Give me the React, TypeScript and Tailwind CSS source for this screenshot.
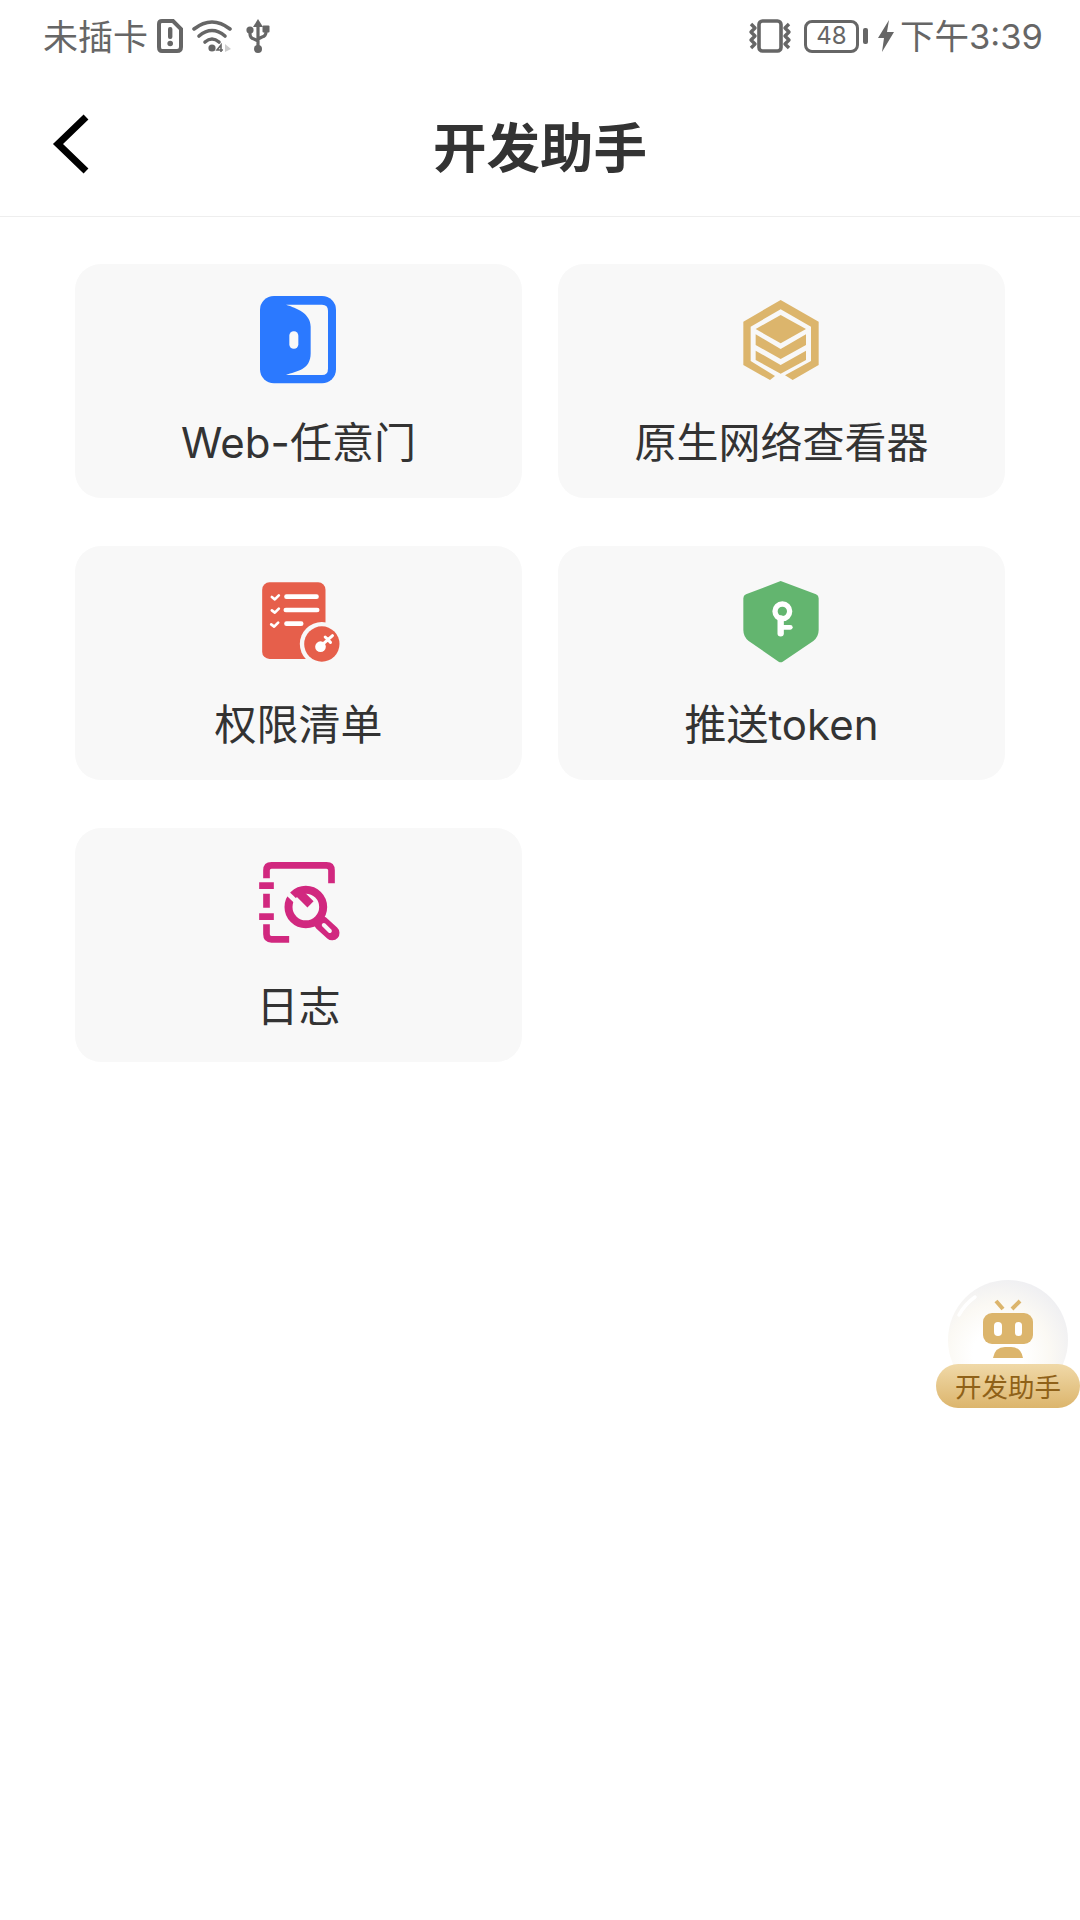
const fontStack = "font-['Inter','Noto_Sans_CJK_SC',sans-serif]";

const DoorIcon = () => (
  <svg viewBox="12 0 390 360" className="h-[120px] w-[130px]">
    <rect x="90" y="48" width="228" height="262" rx="42" fill="#2b79ff" />
    <path
      d="M168 74 H276 Q294 74 294 92 V266 Q294 285 276 285 H168 C200 274 242 270 242 220 V140 C242 100 200 84 168 74 Z"
      fill="#f8f8f8"
    />
    <rect x="178" y="154" width="27" height="52" rx="13" fill="#f8f8f8" />
  </svg>
);

const LayersIcon = () => (
  <svg viewBox="-9 0 390 360" className="h-[120px] w-[130px]" fill="#dcb56c">
    <path d="M182 60 L296 125 V255 L218 300 L195 286 L273 243 V140 L182 88 L92 140 V243 L165 288 L150 300 L70 255 V125 Z" />
    <path d="M182 105 L258 147 L182 190 L107 147 Z" />
    <path d="M107 163 L182 207 L258 163 V195 L182 237 L107 195 Z" />
    <path d="M107 212 L182 255 L258 212 V240 L182 281 L107 240 Z" />
  </svg>
);

const ChecklistIcon = () => (
  <svg viewBox="10.5 -9 390 360" className="h-[120px] w-[130px]">
    <rect x="95" y="52" width="190" height="230" rx="22" fill="#e65f4b" />
    <circle cx="274" cy="237" r="66" fill="#f8f8f8" />
    <circle cx="274" cy="237" r="53" fill="#e65f4b" />
    <g stroke="#fff" strokeLinecap="round" strokeLinejoin="round" fill="none">
      <path d="M168 95 H258" strokeWidth="14" />
      <path d="M166 135 H260" strokeWidth="14" />
      <path d="M168 176 H212" strokeWidth="14" />
      <path d="M124 96 L133 103 L145 91" strokeWidth="8" />
      <path d="M124 136 L133 143 L145 131" strokeWidth="8" />
      <path d="M122 178 L131 185 L143 173" strokeWidth="8" />
      <path d="M272 242 L306 212 M292 224 L300 232 M284 216 L292 224" strokeWidth="9" />
    </g>
    <circle cx="270" cy="245" r="16" fill="#fff" />
  </svg>
);

const ShieldIcon = () => (
  <svg viewBox="-9 -9 390 360" className="h-[120px] w-[130px]">
    <path
      d="M182 48 L288 88 Q296 91 296 100 V195 Q296 215 280 228 L188 290 Q182 294 176 290 L86 228 Q70 215 70 195 V100 Q70 91 78 88 Z"
      fill="#63b56f"
    />
    <g fill="none" stroke="#fff" strokeLinecap="round">
      <circle cx="187" cy="139" r="22" strokeWidth="16" />
      <path d="M182 160 V205" strokeWidth="19" />
      <path d="M184 187 H211" strokeWidth="14" />
    </g>
  </svg>
);

const LogIcon = () => (
  <svg viewBox="10.5 -3 390 360" className="h-[120px] w-[130px]">
    <g fill="none" stroke="#d1287f" strokeWidth="20">
      <path d="M108 100 V76 Q108 61 123 61 H288 Q303 61 303 76 V115" />
      <path d="M86 122 H130 M108 146 V188 M86 215 H130" />
      <path d="M108 238 V268 Q108 283 123 283 H176" />
      <circle cx="226" cy="186" r="52" strokeWidth="24" />
      <path d="M198 136 L240 178" strokeWidth="26" />
      <path d="M272 234 L305 264" strokeWidth="44" strokeLinecap="round" />
    </g>
    <path d="M168 142 L214 186" stroke="#f8f8f8" strokeWidth="14" />
    <path d="M280 240 L298 258" stroke="#f8f8f8" strokeWidth="12" strokeLinecap="round" />
  </svg>
);

const tools = [
  { label: "Web-任意门", icon: <DoorIcon /> },
  { label: "原生网络查看器", icon: <LayersIcon /> },
  { label: "权限清单", icon: <ChecklistIcon /> },
  { label: "推送token", icon: <ShieldIcon /> },
  { label: "日志", icon: <LogIcon /> },
];

const StatusLeft = () => (
  <div className="flex items-center text-[35px] leading-none text-[#666]">
    <span className="pt-[2px]">未插卡</span>
    <svg viewBox="0 0 26 34" className="ml-[9px] h-[34px] w-[26px]">
      <path
        d="M5 2 H16 L24 10 V28 Q24 32 20 32 H5 Q2 32 2 28 V5 Q2 2 5 2 Z"
        fill="none"
        stroke="#666"
        strokeWidth="4"
      />
      <rect x="11" y="8" width="4.4" height="12" rx="2" fill="#666" />
      <circle cx="13.2" cy="24.5" r="2.8" fill="#666" />
    </svg>
    <svg viewBox="0 0 42 34" className="ml-[9px] h-[34px] w-[42px]">
      <g fill="none" stroke="#666" strokeWidth="3.6" strokeLinecap="round">
        <path d="M2 10 Q20 -4 38 10" />
        <path d="M7 17 Q20 6 33 17" />
        <path d="M13 23 Q20 17 27 23" />
      </g>
      <circle cx="20" cy="29" r="3.6" fill="#666" />
      <path d="M29 33 V26 L25 31 H31" fill="none" stroke="#666" strokeWidth="1.6" />
      <path d="M33 25 L39 30 L33 33 Z" fill="#ccc" />
    </svg>
    <svg viewBox="0 0 26 36" className="ml-[11px] h-[36px] w-[26px]">
      <path d="M13 1 L18 9 H8 Z" fill="#666" />
      <path d="M13 6 V30 M5 13 V16 Q5 20 9 21 L13 23 M21 11 V14 Q21 18 17 19 L13 21" fill="none" stroke="#666" strokeWidth="3.2" />
      <circle cx="13" cy="31" r="4" fill="#666" />
      <circle cx="5" cy="12" r="3.6" fill="#666" />
      <rect x="17.5" y="7.5" width="7" height="7" rx="1" fill="#666" />
    </svg>
  </div>
);

const StatusRight = () => (
  <div className="flex items-center text-[35px] leading-none text-[#666]">
    <svg viewBox="0 0 44 34" className="h-[34px] w-[44px]">
      <rect x="11" y="2" width="22" height="30" rx="3.5" fill="none" stroke="#666" strokeWidth="3.6" />
      <g fill="none" stroke="#666" strokeWidth="3.4" strokeLinejoin="round">
        <path d="M3 5 L7 9 L3 13 L7 17 L3 21 L7 25 L3 29" />
        <path d="M41 5 L37 9 L41 13 L37 17 L41 21 L37 25 L41 29" />
      </g>
    </svg>
    <div className="ml-[12px] flex h-[33px] w-[55px] items-center justify-center rounded-[8px] border-[3px] border-[#666] text-[24px]">
      48
    </div>
    <div className="ml-[4px] h-[16px] w-[5px] rounded-[2px] bg-[#666]" />
    <svg viewBox="0 0 16 32" className="ml-[10px] h-[32px] w-[16px]">
      <path d="M11 0 L0 18 H6 L4 32 L16 12 H9 Z" fill="#666" />
    </svg>
    <span className="ml-[6px] pt-[2px] text-[34.5px]">下午3:39</span>
  </div>
);

const FloatingHelper = () => (
  <div className="absolute left-[936px] top-[1280px] h-[128px] w-[144px]">
    <div className="absolute left-[12px] top-0 h-[120px] w-[120px] rounded-full bg-[radial-gradient(circle_at_42%_62%,#ffffff_25%,#fbf9f4_50%,#e4e6f0_100%)]" />
    <svg viewBox="0 0 144 128" className="absolute left-0 top-0 h-[128px] w-[144px]">
      <path d="M23 35 Q29 24 39 17" fill="none" stroke="#fff" strokeWidth="3.5" strokeLinecap="round" />
      <path d="M60 21 L67 29 M84 21 L76 29" stroke="#dcb56c" strokeWidth="4" />
      <rect x="47" y="33" width="50" height="31" rx="9" fill="#dcb56c" />
      <rect x="58" y="42" width="8" height="14" rx="4" fill="#fff" />
      <rect x="79" y="42" width="7" height="14" rx="3.5" fill="#fff" />
      <path d="M57 78 Q59 67 69 67 H75 Q85 67 87 78 Z" fill="#dcb56c" />
    </svg>
    <div className="absolute bottom-0 left-0 flex h-[44px] w-[144px] items-center justify-center rounded-full bg-gradient-to-b from-[#f0d9a8] to-[#dcb56c] pt-[3px] text-[26.5px] text-[#8f6118]">
      开发助手
    </div>
  </div>
);

export default function App() {
  return (
    <div className={`relative h-[1920px] w-[1080px] overflow-hidden bg-white ${fontStack}`}>
      <div className="flex h-[72px] items-center justify-between pl-[43px] pr-[37px]">
        <StatusLeft />
        <StatusRight />
      </div>

      <div className="grid h-[145px] grid-cols-[1fr_auto_1fr] items-center border-b border-[#eeeeee]">
        <svg viewBox="0 0 40 62" className="ml-[51px] h-[62px] w-[40px]">
          <path d="M35 4 L7 31 L35 58" fill="none" stroke="#000" strokeWidth="7" />
        </svg>
        <h1 className="pt-[9px] text-[53.5px] font-bold leading-none text-[#333]">开发助手</h1>
        <div />
      </div>

      <div className="grid grid-cols-2 gap-x-[36px] gap-y-[48px] px-[75px] pt-[47px]">
        {tools.map((tool) => (
          <div
            key={tool.label}
            className="flex h-[234px] flex-col items-center rounded-[26px] bg-[#f8f8f8] pt-[16px]"
          >
            {tool.icon}
            <p className="mt-[13px] text-[42px] leading-[60px] text-[#333]">{tool.label}</p>
          </div>
        ))}
      </div>

      <FloatingHelper />
    </div>
  );
}
